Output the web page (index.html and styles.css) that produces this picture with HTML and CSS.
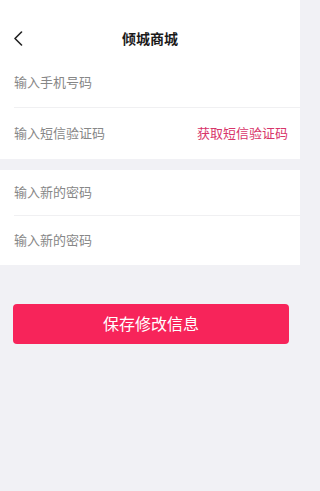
FILE: index.html
```html
<!DOCTYPE html>
<html lang="zh">
<head>
<meta charset="utf-8">
<meta name="viewport" content="width=device-width, initial-scale=1">
<title>倾城商城</title>
<link rel="stylesheet" href="styles.css">
</head>
<body>
<div class="page">
  <header class="nav">
    <span class="back">
      <svg width="10" height="15" viewBox="0 0 10 15"><path d="M8.5 1 L2 7.5 L8.5 14" fill="none" stroke="#222" stroke-width="1.6" stroke-linecap="round" stroke-linejoin="round"/></svg>
    </span>
    <h1 class="title">倾城商城</h1>
  </header>
  <section class="group group-top">
    <div class="row"><span class="ph">输入手机号码</span></div>
    <div class="row"><span class="ph">输入短信验证码</span><span class="code">获取短信验证码</span></div>
  </section>
  <section class="group group-pw">
    <div class="row row-pw"><span class="ph">输入新的密码</span></div>
    <div class="row row-pw"><span class="ph">输入新的密码</span></div>
  </section>
  <div class="actions">
    <button class="save">保存修改信息</button>
  </div>
</div>
</body>
</html>
```

FILE: styles.css
```css
* { box-sizing: border-box; }
html, body { margin: 0; padding: 0; }
body {
  background: #f1f1f5;
  font-family: "Noto Sans CJK SC", "Noto Sans", sans-serif;
  min-height: 491px;
}
.page { display: flex; flex-direction: column; max-width: 300px; }
.nav {
  background: #fff;
  height: 57px;
  padding-top: 19px;
  display: flex;
  align-items: center;
  justify-content: center;
  position: relative;
}
.nav .back {
  position: absolute;
  left: 13px;
  top: 31px;
  display: flex;
}
.title {
  margin: 0;
  font-size: 14px;
  font-weight: 700;
  color: #1a1a1a;
  line-height: 37px;
}
.group { background: #fff; padding-left: 14px; }
.group-pw { margin-top: 11px; }
.row {
  height: 51px;
  display: flex;
  align-items: center;
  justify-content: space-between;
  padding-right: 12px;
  padding-bottom: 2px;
  border-bottom: 1px solid #f0f0f2;
}
.row:last-child { border-bottom: none; }
.row-pw { height: 47px; }
.row-pw:first-child { height: 46px; }
.row-pw:last-child { height: 49px; }
.ph { font-size: 13px; color: #878787; }
.code { font-size: 13px; color: #d8356a; }
.actions { padding: 39px 11px 0 13px; }
.save {
  width: 100%;
  height: 40px;
  border: none;
  border-radius: 4px;
  background: #f7245a;
  color: #fff;
  font-family: "Noto Sans CJK SC", "Noto Sans", sans-serif;
  font-size: 16px;
  padding: 0 0 2px 0;
}
```
